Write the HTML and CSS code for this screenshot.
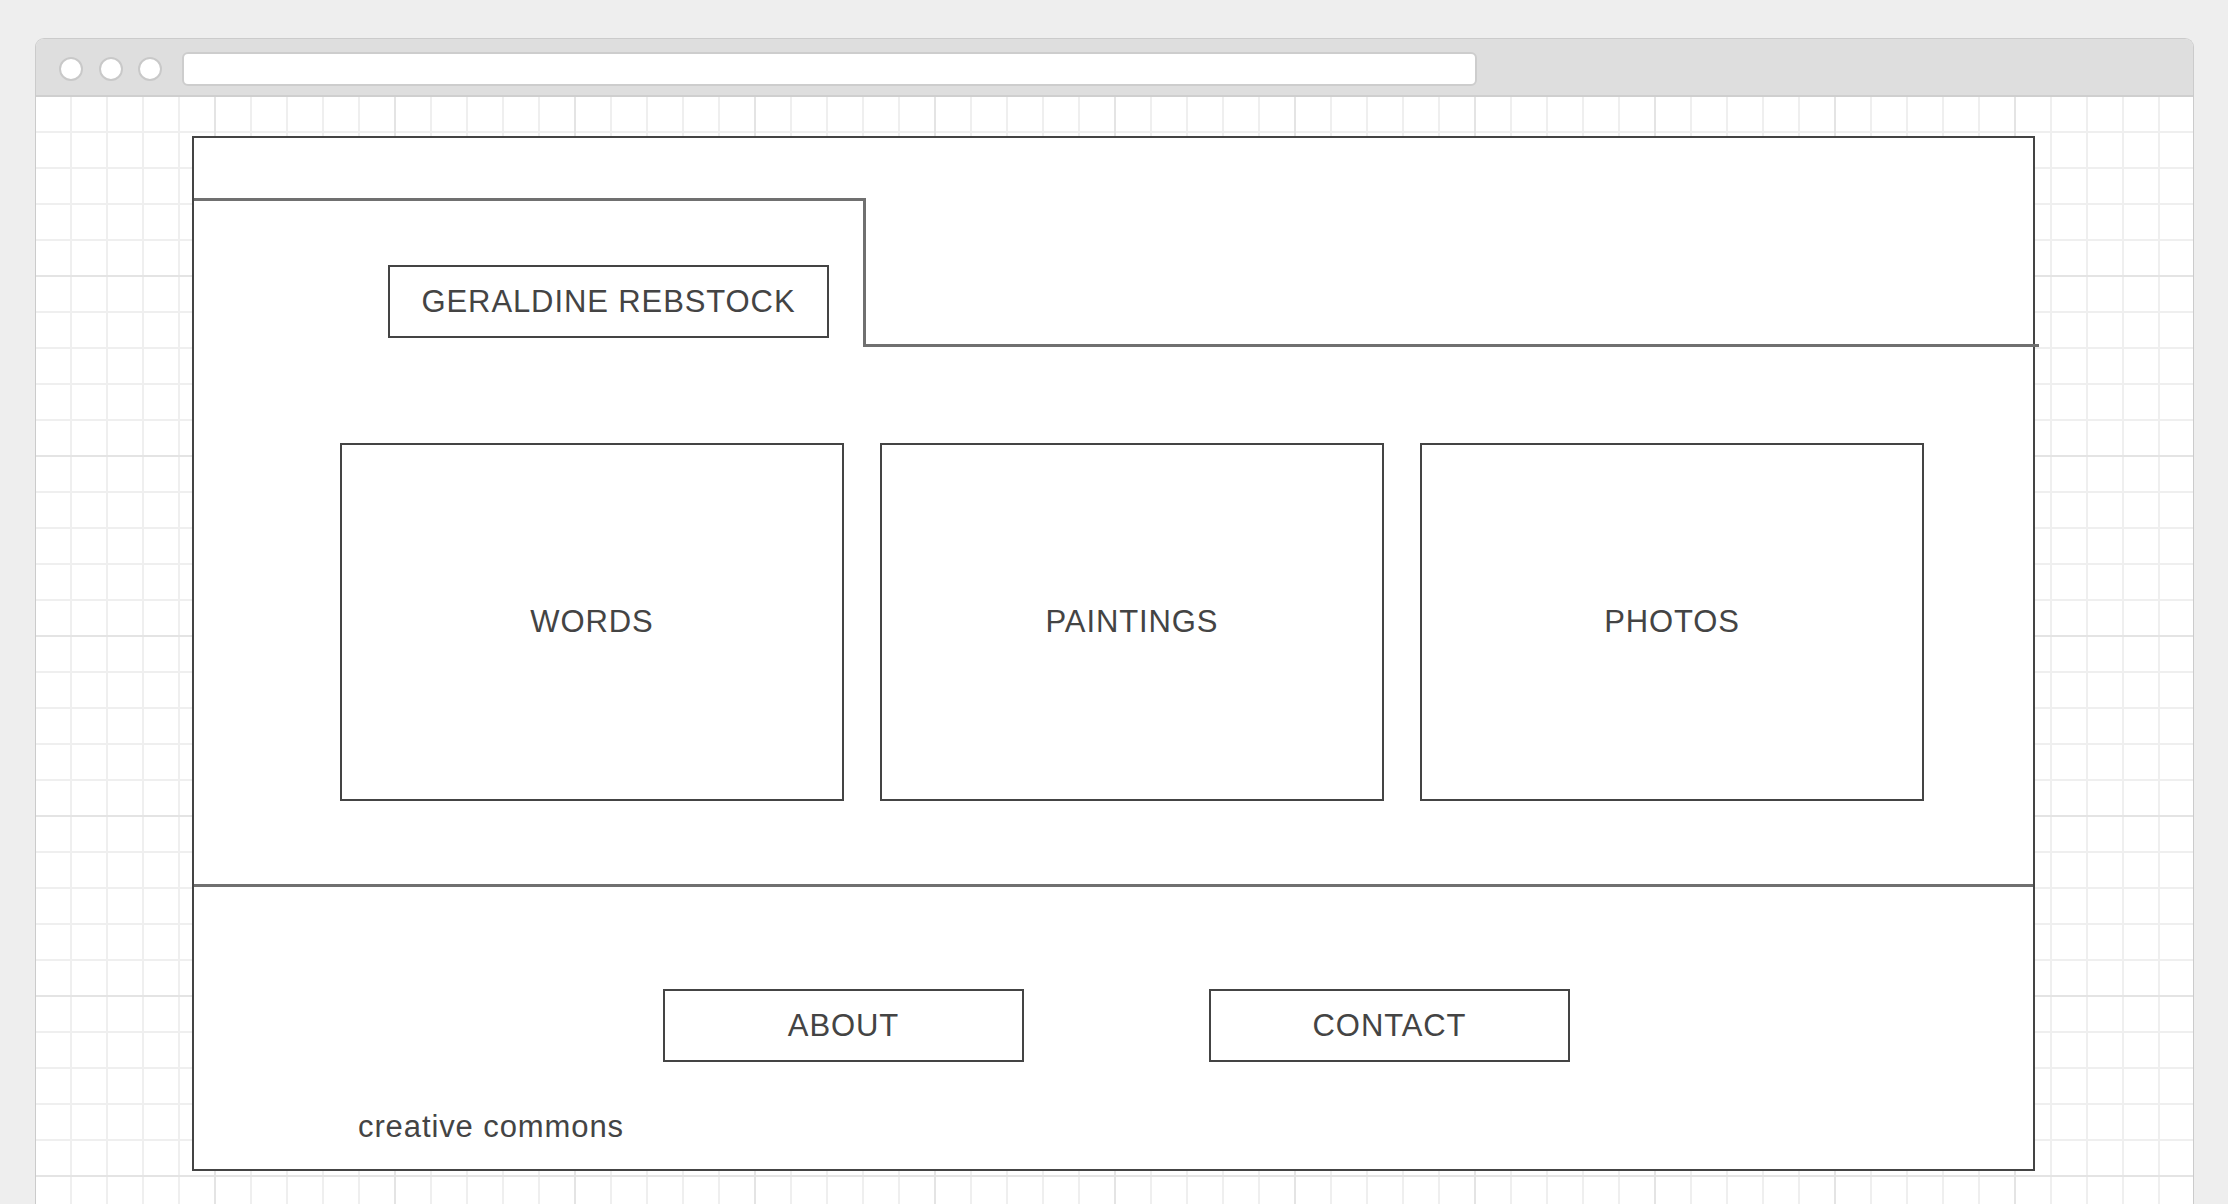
FILE: index.html
```html
<!DOCTYPE html>
<html lang="en">
<head>
    <meta charset="UTF-8">
    <meta name="viewport" content="width=device-width, initial-scale=1.0">
    <title>Geraldine Rebstock - wireframe</title>
    <link rel="stylesheet" href="styles.css">
</head>
<body>
    <div class="window">
        <div class="titlebar">
            <span class="dot"></span>
            <span class="dot"></span>
            <span class="dot"></span>
            <div class="urlbar"></div>
        </div>
        <div class="canvas">
            <div class="page">
                <div class="header">
                    <div class="header-left">
                        <div class="box name-box">GERALDINE REBSTOCK</div>
                    </div>
                    <div class="header-right"></div>
                </div>
                <div class="cards">
                    <div class="box card">WORDS</div>
                    <div class="box card">PAINTINGS</div>
                    <div class="box card">PHOTOS</div>
                </div>
                <div class="divider"></div>
                <div class="links">
                    <div class="box link">ABOUT</div>
                    <div class="box link">CONTACT</div>
                </div>
                <div class="credit">creative commons</div>
            </div>
        </div>
    </div>
</body>
</html>
```

FILE: styles.css
```css
* {
    box-sizing: border-box;
}
body {
    margin: 0;
    height: 1204px;
    overflow: hidden;
    background-color: #eeeeee;
    font-family: "Liberation Sans", Arial, sans-serif;
    color: #444;
}
.window {
    margin: 38px 0 0 35px;
    width: 2159px;
    height: 1166px;
    border: 1px solid #cbcbcb;
    border-bottom: none;
    border-radius: 9px 9px 0 0;
    overflow: hidden;
    display: flex;
    flex-direction: column;
}
.titlebar {
    height: 58px;
    flex-shrink: 0;
    display: flex;
    align-items: center;
    padding: 4px 0 0 23px;
    background-color: #dedede;
    border-bottom: 2px solid #cfcfcf;
}
.dot {
    width: 24px;
    height: 24px;
    border-radius: 50%;
    background-color: #fff;
    border: 2px solid #c9c9c9;
    margin-right: 15.5px;
}
.urlbar {
    margin-left: 4px;
    width: 1295px;
    height: 34px;
    background-color: #fff;
    border: 2px solid #cdcdcd;
    border-radius: 6px;
}
.canvas {
    flex: 1;
    padding: 39px 0 0 156px;
    background-color: #fff;
    background-image:
        linear-gradient(to right, #e4e4e4 2px, transparent 2px),
        linear-gradient(to bottom, #e4e4e4 2px, transparent 2px),
        linear-gradient(to right, #efefef 2px, transparent 2px),
        linear-gradient(to bottom, #efefef 2px, transparent 2px);
    background-size: 180px 180px, 180px 180px, 36px 36px, 36px 36px;
    background-position: 178px 178px, 178px 178px, 34px 34px, 34px 34px;
}
.page {
    width: 1843px;
    height: 1035px;
    background-color: #fff;
    border: 2px solid #444;
}
.box {
    border: 2px solid #444;
    display: flex;
    align-items: center;
    justify-content: center;
    font-size: 31px;
    letter-spacing: 0.9px;
    background-color: #fff;
}
.header {
    margin-top: 60px;
    display: flex;
    align-items: flex-start;
}
.header-left {
    width: 672px;
    height: 149px;
    border-top: 3px solid #707070;
    border-right: 3px solid #707070;
    padding: 64px 0 0 194px;
}
.name-box {
    width: 441px;
    height: 73px;
}
.header-right {
    flex: 1;
    height: 149px;
    margin-right: -6px;
    border-bottom: 3px solid #707070;
}
.cards {
    margin-top: 96px;
    padding-left: 146px;
    display: flex;
    gap: 36px;
}
.card {
    width: 504px;
    height: 358px;
}
.divider {
    margin-top: 83px;
    height: 3px;
    background-color: #707070;
}
.links {
    margin-top: 102px;
    padding-left: 469px;
    display: flex;
    gap: 185px;
}
.link {
    width: 361px;
    height: 73px;
}
.credit {
    margin-top: 47px;
    padding-left: 164px;
    font-size: 31px;
    line-height: 35px;
    letter-spacing: 0.9px;
}
```
